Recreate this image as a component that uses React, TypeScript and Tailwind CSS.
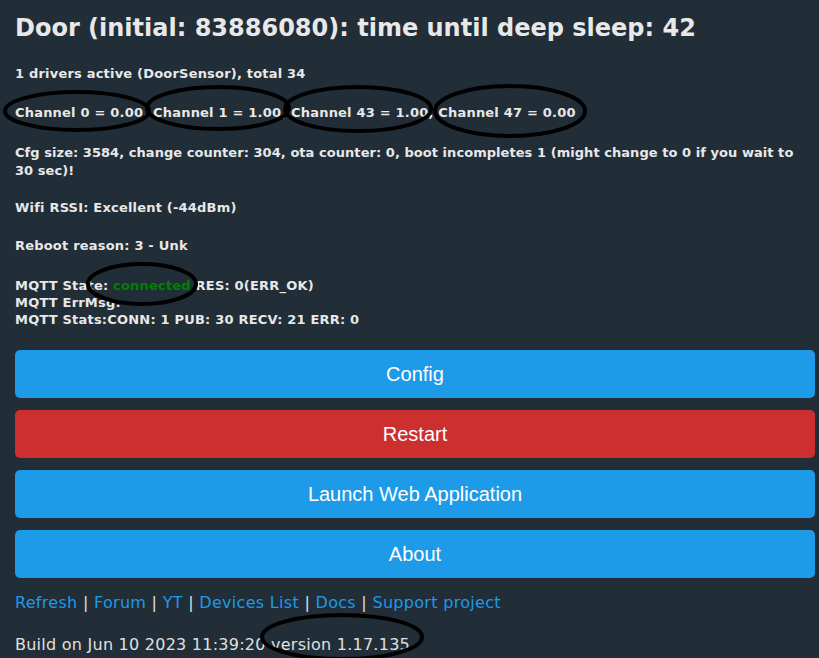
import React from "react";

const verdana = { fontFamily: '"DejaVu Sans", Verdana, sans-serif' };

export default function App() {
  const buttons = [
    { label: "Config", cls: "bg-[#1d9ae8]" },
    { label: "Restart", cls: "bg-[#cd2f2f]" },
    { label: "Launch Web Application", cls: "bg-[#1d9ae8]" },
    { label: "About", cls: "bg-[#1d9ae8]" },
  ];
  const links = ["Refresh", "Forum", "YT", "Devices List", "Docs", "Support project"];
  return (
    <div className="relative w-[819px] h-[658px] overflow-hidden bg-[#212d37] pl-[15px] pr-[4px] text-[#e8e8e8] font-['DejaVu_Sans',sans-serif]">
      <h1 className="pt-[12px] text-[24px] leading-[32px] font-bold whitespace-nowrap">
        Door (initial: 83886080): time until deep sleep: 42
      </h1>
      <div className="text-[13px] font-bold leading-[18px] tracking-[0.2px]">
        <p className="mt-[21px]">1 drivers active (DoorSensor), total 34</p>
        <p className="mt-[21px] whitespace-nowrap">
          Channel 0 = 0.00, Channel 1 = 1.00, Channel 43 = 1.00, Channel 47 = 0.00
        </p>
        <p className="mt-[22px] tracking-[0.05px]">
          Cfg size: 3584, change counter: 304, ota counter: 0, boot incompletes 1 (might change to 0 if you wait to 30 sec)!
        </p>
        <p className="mt-[19px]">Wifi RSSI: Excellent (-44dBm)</p>
        <p className="mt-[20px]">Reboot reason: 3 - Unk</p>
        <div className="mt-[22px] leading-[17px]">
          <p>
            MQTT State: <span className="text-[#008000]">connected</span> RES: 0(ERR_OK)
          </p>
          <p>MQTT ErrMsg:</p>
          <p>MQTT Stats:CONN: 1 PUB: 30 RECV: 21 ERR: 0</p>
        </div>
      </div>
      <div className="mt-[22px] flex flex-col gap-[12px]">
        {buttons.map((b) => (
          <div
            key={b.label}
            className={`${b.cls} h-[48px] rounded-[5px] flex items-center justify-center text-white text-[20px] font-['Liberation_Sans',Arial,sans-serif]`}
          >
            {b.label}
          </div>
        ))}
      </div>
      <div className="mt-[15px] text-[16px] leading-[20px] tracking-[0.3px] whitespace-nowrap" style={verdana}>
        {links.map((l, i) => (
          <span key={l}>
            <span className="text-[#1d9ae8]">{l}</span>
            {i < links.length - 1 && <span className="text-[#e0e0e0]"> | </span>}
          </span>
        ))}
      </div>
      <div className="mt-[22px] text-[16px] leading-[20px] tracking-[0.25px] text-[#e0e0e0] whitespace-nowrap">
        Build on Jun 10 2023 11:39:20 version 1.17.135
      </div>
      <svg className="absolute left-0 top-0 pointer-events-none" width="819" height="658">
        <g fill="none" stroke="#000" strokeWidth="4">
          <ellipse cx="77" cy="111" rx="72" ry="19" />
          <ellipse cx="218" cy="108" rx="71" ry="21" />
          <ellipse cx="358" cy="109" rx="73" ry="22" />
          <ellipse cx="510" cy="111" rx="75" ry="25" />
          <ellipse cx="142" cy="284" rx="54" ry="20" />
          <ellipse cx="342" cy="637" rx="80" ry="22" />
        </g>
      </svg>
    </div>
  );
}
